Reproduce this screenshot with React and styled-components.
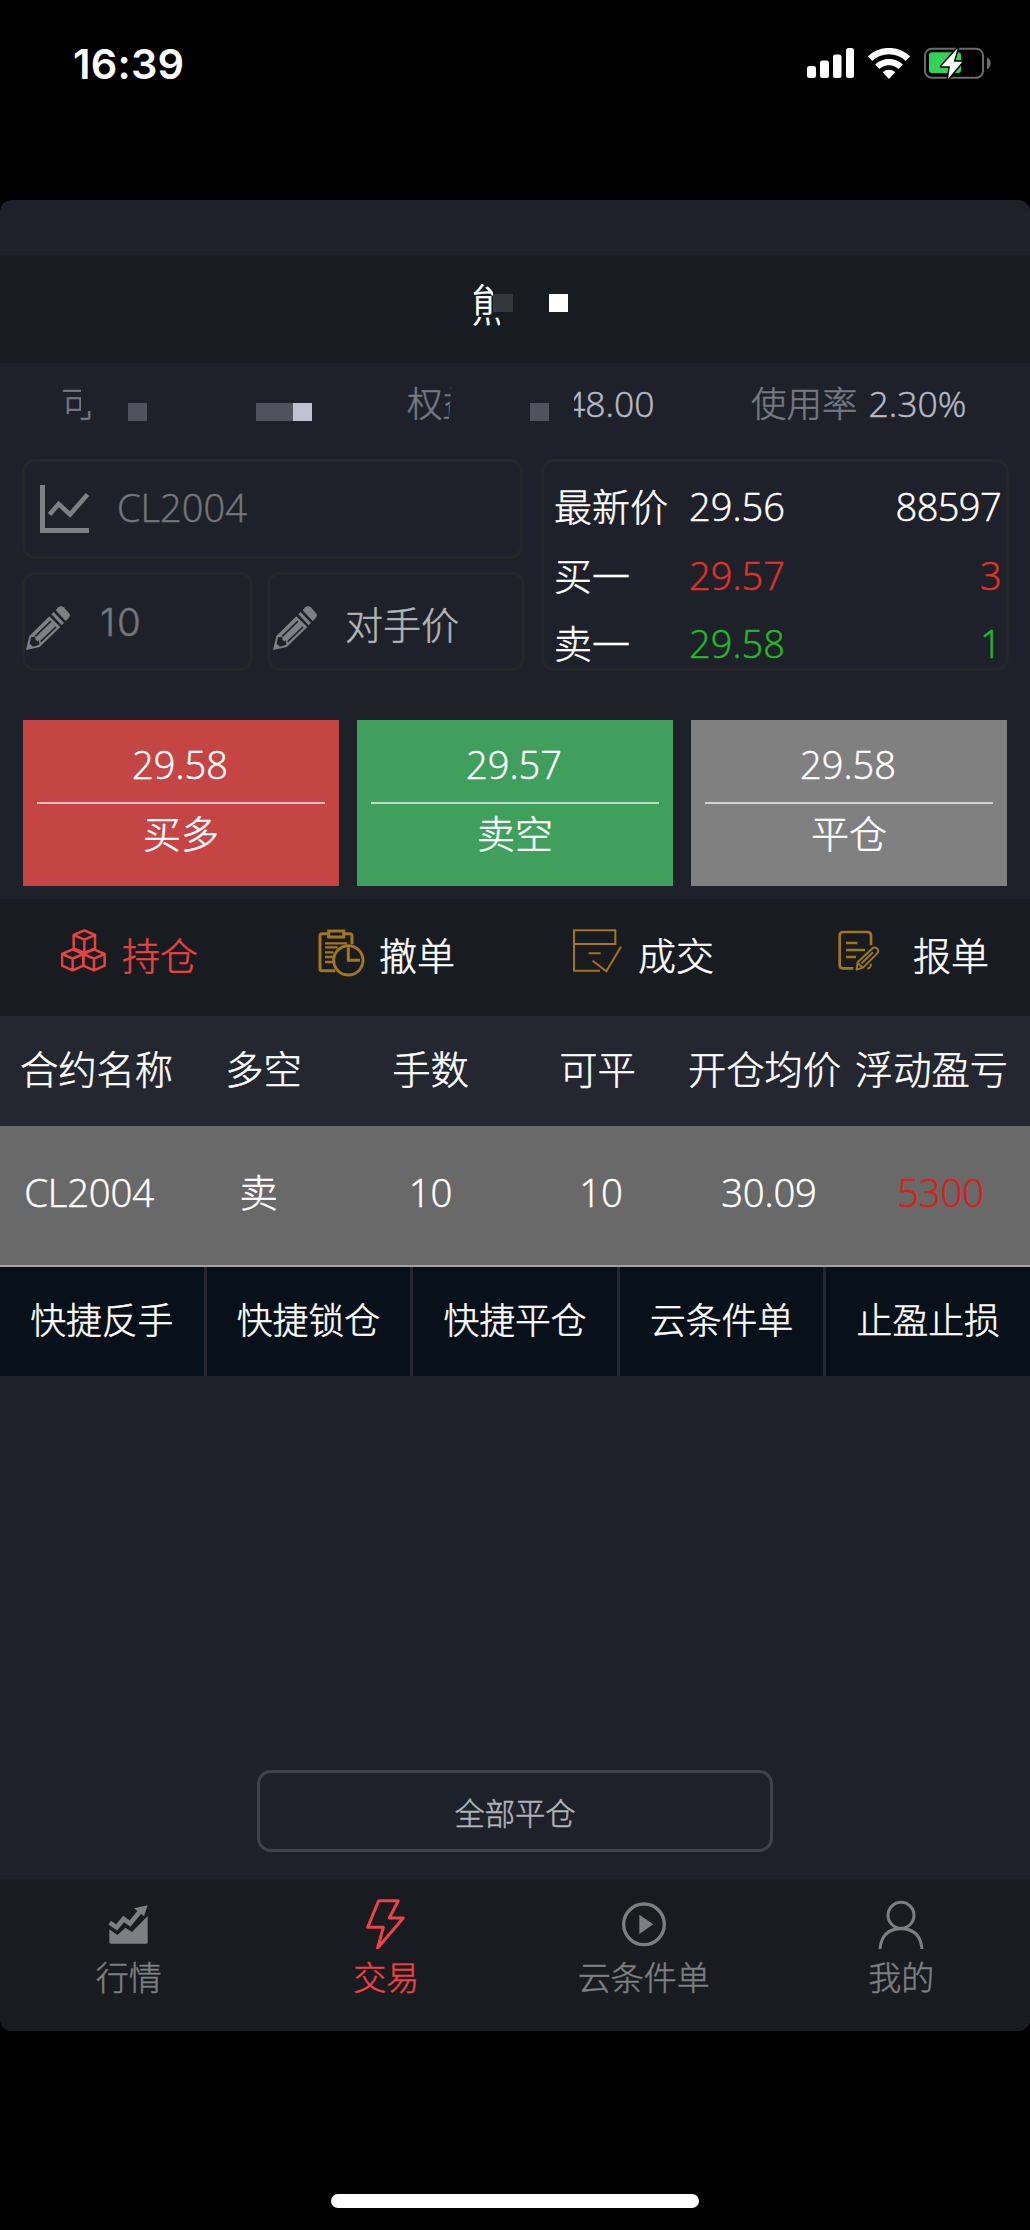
import React from 'react';
import styled, { createGlobalStyle } from 'styled-components';

const GlobalStyle = createGlobalStyle`
  * {
    box-sizing: border-box;
  }
  body {
    margin: 0;
    background: #000;
    color: #fff;
    font-family: 'Open Sans', 'Noto Sans CJK SC', sans-serif;
    font-weight: 300;
    -webkit-text-stroke: 0.5px currentColor;
  }
`;

const Phone = styled.div`
  width: 1030px;
  height: 2230px;
  background: #000;
  display: flex;
  flex-direction: column;
  overflow: hidden;
`;

const StatusBar = styled.header`
  height: 200px;
  padding: 38px 39px 0 73px;
  display: flex;
  justify-content: space-between;
  align-items: flex-start;
`;

const Clock = styled.time`
  font-family: Inter, sans-serif;
  font-weight: 600;
  font-size: 41.5px;
  letter-spacing: 0.2px;
  line-height: 52px;
  -webkit-text-stroke: 0;
`;

const StatusIcons = styled.div`
  display: flex;
  align-items: center;
  gap: 14px;
  height: 50px;
  svg {
    display: block;
  }
`;

const Screen = styled.main`
  height: 1831px;
  background: #1e2129;
  border-radius: 12px;
  overflow: hidden;
  display: flex;
  flex-direction: column;
`;

const TitleBar = styled.div`
  margin-top: 55px;
  height: 108px;
  padding: 0 0 13px 471px;
  background: #181b1f;
  display: flex;
  align-items: center;
  font-size: 44px;
  line-height: 48px;
`;

const Cut = styled.span`
  width: ${({ $width }) => $width}px;
  padding-top: ${({ $drop }) => $drop || 0}px;
  white-space: nowrap;
  clip-path: ${({ $clip }) => $clip};
`;

const Block = styled.i`
  width: ${({ $width }) => $width || 19}px;
  height: 18px;
  margin-left: ${({ $left }) => $left || 0}px;
  background: ${({ $color }) => $color || '#50525e'};
`;

const Account = styled.div`
  height: 96px;
  padding: 0 0 16px 61px;
  display: flex;
  align-items: center;
  font-size: 35.5px;
  line-height: 44px;
  color: #777981;
  white-space: nowrap;
  ${Block} {
    position: relative;
    top: 9px;
  }
`;

const Figure = styled.span`
  color: #b8bac6;
  margin-left: ${({ $left }) => $left || 0}px;
  width: ${({ $width }) => $width}px;
  clip-path: ${({ $clip }) => $clip || 'none'};
`;

const Label = styled.span`
  margin-left: ${({ $left }) => $left}px;
`;

const Order = styled.section`
  height: 212px;
  padding: 0 21px 0 22px;
  display: grid;
  grid-template-columns: 503px 468px;
  grid-template-rows: 212px;
  column-gap: 16px;
`;

const Inputs = styled.div`
  display: grid;
  grid-template-columns: 231px 258px;
  grid-template-rows: 100px 99px;
  gap: 13px 14px;
`;

const Field = styled.div`
  grid-column: ${({ $wide }) => ($wide ? '1 / 3' : 'auto')};
  width: ${({ $wide }) => ($wide ? '501px' : 'auto')};
  border: 3px solid #25262a;
  border-radius: 13px;
  display: flex;
  align-items: center;
  padding-left: ${({ $inset }) => $inset}px;
  padding-top: ${({ $wide }) => ($wide ? 0 : 12)}px;
  font-size: 38px;
  line-height: 46px;
  color: #74767b;
  svg {
    flex: none;
    color: #7f8084;
  }
`;

const FieldText = styled.span`
  margin-left: ${({ $left }) => $left}px;
  margin-top: ${({ $lift }) => -$lift}px;
  color: ${({ $bright }) => ($bright ? '#b4b5b8' : 'inherit')};
`;

const Quantity = styled(FieldText)`
  font-family: Inter, sans-serif;
  font-size: 38.5px;
  letter-spacing: 1.8px;
`;

const Quote = styled.div`
  border: 3px solid #25262a;
  border-radius: 13px;
  padding: 10px 5px 0 10px;
  font-size: 38px;
`;

const QuoteRow = styled.div`
  height: 68.5px;
  display: grid;
  grid-template-columns: 135px 1fr auto;
  align-items: center;
  line-height: 46px;
  color: ${({ $color }) => $color || '#fff'};
  letter-spacing: -0.6px;
  span:first-child {
    color: #fff;
    letter-spacing: 0;
  }
  span:nth-child(2) {
    letter-spacing: 0;
  }
`;

const TradeButtons = styled.div`
  height: 228px;
  padding: 49px 23px 13px;
  display: grid;
  grid-template-columns: repeat(3, 316px);
  gap: 18px;
`;

const TradeButton = styled.button`
  border: 0;
  padding: 7px 14px 0;
  background: ${({ $bg }) => $bg};
  color: #fff;
  font: inherit;
  font-size: 38px;
  line-height: 74px;
  text-align: center;
  display: flex;
  flex-direction: column;
`;

const Price = styled.span`
  border-bottom: 2px solid rgba(255, 255, 255, 0.65);
  height: 77px;
  width: 100%;
  padding-right: 2px;
`;

const Action = styled.span`
  width: 100%;
  line-height: 58px;
`;

const Tabs = styled.nav`
  height: 117px;
  background: #181b1f;
  display: flex;
  align-items: flex-start;
  padding-top: 30px;
  font-size: 38px;
  line-height: 52px;
`;

const Tab = styled.a`
  display: flex;
  margin-left: ${({ $left }) => $left}px;
  color: ${({ $active }) => ($active ? '#e84342' : '#fff')};
  svg {
    flex: none;
    margin-right: ${({ $gap }) => $gap}px;
    margin-top: ${({ $top }) => $top || 0}px;
    color: ${({ $active }) => ($active ? '#e84342' : '#a2751f')};
  }
`;

const TabText = styled.span`
  width: 76px;
`;

const HeadRow = styled.div`
  height: 110px;
  padding: 0 13px 4px;
  background: #24272f;
  display: grid;
  grid-template-columns: repeat(6, 167px);
  align-items: center;
  text-align: center;
  font-size: 38.3px;
  line-height: 50px;
  white-space: nowrap;
`;

const DataRow = styled(HeadRow)`
  height: 141px;
  padding-bottom: 7px;
  background: #696969;
  border-bottom: 2px solid #a4a4a4;
  letter-spacing: -0.2px;
`;

const Cell = styled.span`
  padding-left: ${({ $indent }) => $indent || 0}px;
  padding-right: ${({ $outdent }) => $outdent || 0}px;
  color: ${({ $loss }) => ($loss ? '#d91e1c' : '#fff')};
`;

const Shortcuts = styled.div`
  height: 109px;
  background: #08111a;
  display: grid;
  grid-template-columns: repeat(4, 206.6px) 1fr;
`;

const Shortcut = styled.a`
  border-right: 3px solid #24262b;
  text-align: center;
  font-size: 35.8px;
  line-height: 107px;
  &:last-child {
    border-right: 0;
  }
`;

const CloseAll = styled.button`
  width: 516px;
  height: 82px;
  margin: auto auto 27px;
  padding: 6px 0 0;
  border: 3px solid #41434b;
  border-radius: 14px;
  background: transparent;
  color: #b2b3b7;
  font: inherit;
  font-size: 30.3px;
  line-height: 40px;
`;

const BottomNav = styled.nav`
  height: 152px;
  background: #181b1f;
  display: grid;
  grid-template-columns: repeat(4, 1fr);
`;

const NavItem = styled.a`
  display: flex;
  flex-direction: column;
  align-items: center;
  padding-top: 20px;
  font-size: 33px;
  line-height: 40px;
  color: ${({ $active }) => ($active ? '#ee4248' : '#7e7f81')};
  svg {
    margin-bottom: 9px;
  }
`;

const HomeIndicator = styled.div`
  width: 368px;
  height: 14px;
  margin: 163px auto 0;
  border-radius: 7px;
  background: #fff;
`;

const SignalIcon = () => (
  <svg width="47" height="30" viewBox="0 0 47 30" fill="#fff">
    <rect x="0" y="18" width="9" height="12" rx="2.5" />
    <rect x="13" y="12.5" width="9" height="17.5" rx="2.5" />
    <rect x="26" y="6.5" width="8.5" height="23.5" rx="2.5" />
    <rect x="39" y="0" width="8" height="30" rx="2.5" />
  </svg>
);

const WifiIcon = () => (
  <svg width="42" height="31" viewBox="0 0 42 31" fill="none" stroke="#fff">
    <path d="M2 10.7a27.6 27.6 0 0 1 38 0" strokeWidth="6.4" />
    <path d="M9.3 18.8a17 17 0 0 1 23.4 0" strokeWidth="6.2" />
    <path d="M14.7 24.3a9.2 9.2 0 0 1 12.6 0L21 31z" fill="#fff" stroke="none" />
  </svg>
);

const BatteryIcon = () => (
  <svg width="67" height="34" viewBox="432 49 201 102">
    <rect x="435" y="57" width="174" height="87" rx="20" fill="none" stroke="#6b6b6d" strokeWidth="6" />
    <path d="M621 83q11 6 11 18t-11 18z" fill="#6b6b6d" />
    <rect x="447" y="68" width="96" height="62" rx="9" fill="#32d158" />
    <path
      d="M533 56L484 110h26l-6 38 43-52h-26z"
      fill="#fff"
      stroke="#000"
      strokeWidth="9"
      strokeLinejoin="round"
      paintOrder="stroke"
    />
  </svg>
);

const ChartIcon = () => (
  <svg width="49" height="49" viewBox="0 0 49 49" fill="none" stroke="currentColor">
    <path d="M2.5 0v45.5H49" strokeWidth="5" />
    <path d="M9.5 29.5L18.7 19 30 29.5 47.5 9.5" strokeWidth="4.6" />
  </svg>
);

const PencilIcon = () => (
  <svg width="44" height="44" viewBox="0 0 132 132" fill="currentColor">
    <path d="M89 13l8-9q8-7 16 0l15 16q7 8 0 16l-9 9z" />
    <path d="M76 25l7-7 31 33-7 7z" />
    <path d="M70 31l33 32-62 60L0 132l10-42z" />
    <path d="M28 91l47-46M44 107l46-44" stroke="#1e2129" strokeWidth="5" fill="none" />
    <path d="M15 94l11-2 4 9 9 3 1 12-19 6-10-9z" fill="#1e2129" />
    <path d="M32 97l4 4 0 6-8-6z" />
  </svg>
);

const CubesIcon = () => (
  <svg
    width="45"
    height="43"
    viewBox="183 90 135 129"
    fill="none"
    stroke="currentColor"
    strokeWidth="7.5"
    strokeLinejoin="round"
  >
    <path d="M253 94l32 14v40l-32 14-32-14v-40zM221 108l32 14 32-14M253 122v40" />
    <path d="M218 151l32 14v35l-32 14-32-14v-35zM186 165l32 14 32-14M218 179v35" />
    <path d="M282 151l32 14v35l-32 14-32-14v-35zM250 165l32 14 32-14M282 179v35" />
  </svg>
);

const ClipboardClockIcon = () => (
  <svg width="47" height="48" viewBox="956 87 141 144" fill="none" stroke="currentColor" strokeWidth="9">
    <path d="M985 101h-17q-6 0-6 6v99q0 6 6 6h40M1034 101h17q7 0 7 6v26" />
    <rect x="988" y="93" width="45" height="18" />
    <path d="M977 130h67M977 142h38M977 157h26M977 171h24M977 186h26" strokeWidth="7" />
    <circle cx="1047" cy="181" r="44" />
    <path d="M1047 142v39h35" />
  </svg>
);

const DealIcon = () => (
  <svg width="50" height="44" viewBox="187 87 150 132" fill="none" stroke="currentColor" strokeWidth="6">
    <path d="M193 132V91h124v41zV212h78M237 160h36M249 182l41 32 44-74" />
  </svg>
);

const ReportIcon = () => (
  <svg
    width="42"
    height="42"
    viewBox="984 94 126 126"
    fill="none"
    stroke="currentColor"
    strokeWidth="8"
    strokeLinejoin="round"
  >
    <path d="M1083 140v-29q0-11-11-11h-72q-11 0-11 11v87q0 11 11 11h30" />
    <path d="M1008 133h34M1008 154h57M1008 175h30" />
    <path d="M1040 213l3-22 43-41q8-7 16 0 6 8-1 15l-42 42z" strokeWidth="6" />
    <path d="M1055 194l34-33M1043 193l15 14M1072 210q11-3 11-15" strokeWidth="6" />
  </svg>
);

const MarketIcon = () => (
  <svg width="48" height="50" viewBox="314 449 144 150">
    <path d="M327 540l24 17 24-22 20 13 47-48v79q0 4-4 4H331q-4 0-4-4z" fill="currentColor" />
    <path d="M328 520l21 14 21-25 19 14 33-40" fill="none" stroke="currentColor" strokeWidth="14" />
    <path d="M442 468l-41 9 30 24z" fill="currentColor" />
  </svg>
);

const BoltIcon = () => (
  <svg width="48" height="50" viewBox="1087 449 144 150">
    <path
      d="M1137 454h59l-27 52h42l-77 90 17-62h-47z"
      fill="none"
      stroke="currentColor"
      strokeWidth="9"
      strokeLinejoin="round"
    />
  </svg>
);

const PlayIcon = () => (
  <svg width="48" height="50" viewBox="329 448 144 150">
    <circle cx="401" cy="524" r="61" fill="none" stroke="currentColor" strokeWidth="10" />
    <path d="M387 495l42 29-42 29z" fill="currentColor" />
  </svg>
);

const UserIcon = () => (
  <svg width="48" height="50" viewBox="1102 449 144 150" fill="none" stroke="currentColor" strokeWidth="9">
    <circle cx="1174" cy="498" r="39" />
    <path d="M1111 600q5-62 63-62t63 62" />
  </svg>
);

const quotes = [
  { name: '最新价', price: '29.56', volume: '88597' },
  { name: '买一', price: '29.57', volume: '3', color: '#e0322a' },
  { name: '卖一', price: '29.58', volume: '1', color: '#22b82a' },
];

const trades = [
  { price: '29.58', label: '买多', bg: '#c54545' },
  { price: '29.57', label: '卖空', bg: '#419f5e' },
  { price: '29.58', label: '平仓', bg: '#808080' },
];

const columns = ['合约名称', '多空', '手数', '可平', '开仓均价', '浮动盈亏'];

const position = [
  { value: 'CL2004', outdent: 15 },
  { value: '卖', outdent: 10 },
  { value: '10' },
  { value: '10', indent: 7 },
  { value: '30.09', indent: 9 },
  { value: '5300', indent: 18, loss: true },
];

const shortcuts = ['快捷反手', '快捷锁仓', '快捷平仓', '云条件单', '止盈止损'];

const navItems = [
  { label: '行情', Icon: MarketIcon },
  { label: '交易', Icon: BoltIcon, active: true },
  { label: '云条件单', Icon: PlayIcon },
  { label: '我的', Icon: UserIcon },
];

export default function App() {
  return (
    <>
      <GlobalStyle />
      <Phone>
        <StatusBar>
          <Clock>16:39</Clock>
          <StatusIcons>
            <SignalIcon />
            <WifiIcon />
            <BatteryIcon />
          </StatusIcons>
        </StatusBar>

        <Screen>
          <TitleBar>
            <Cut
              $width={22}
              $drop={4}
              $clip="polygon(0 0, 22px 0, 22px 41px, 29px 41px, 29px 110%, 0 110%)"
            >
              熊
            </Cut>
            <Block $width={20} $color="#34373b" />
            <Block $left={36} $color="#fff" />
          </TitleBar>

          <Account>
            <Cut $width={36} $clip="polygon(0 0, 20px 0, 20px 30px, 31px 30px, 31px 100%, 0 100%)">
              可
            </Cut>
            <Block $left={31} />
            <Block $left={109} $width={37} />
            <Block $color="#c0c2d1" />
            <Label $left={95}>权</Label>
            <Cut $width={35.5} $clip="polygon(0 0, 9px 0, 6px 100%, 0 100%)">
              益
            </Cut>
            <Block $left={52} />
            <Figure $left={16} $width={94} $clip="inset(0 0 0 9px)">
              48.00
            </Figure>
            <Label $left={92}>使用率</Label>
            <Figure $left={11}>2.30%</Figure>
          </Account>

          <Order>
            <Inputs>
              <Field $wide $inset={15}>
                <ChartIcon />
                <FieldText $left={28} $lift={5}>
                  CL2004
                </FieldText>
              </Field>
              <Field $inset={1}>
                <PencilIcon />
                <Quantity $left={30} $lift={12}>
                  10
                </Quantity>
              </Field>
              <Field $inset={3}>
                <PencilIcon />
                <FieldText $left={28} $lift={8} $bright>
                  对手价
                </FieldText>
              </Field>
            </Inputs>
            <Quote>
              {quotes.map((quote) => (
                <QuoteRow key={quote.name} $color={quote.color}>
                  <span>{quote.name}</span>
                  <span>{quote.price}</span>
                  <span>{quote.volume}</span>
                </QuoteRow>
              ))}
            </Quote>
          </Order>

          <TradeButtons>
            {trades.map((trade) => (
              <TradeButton key={trade.label} $bg={trade.bg}>
                <Price>{trade.price}</Price>
                <Action>{trade.label}</Action>
              </TradeButton>
            ))}
          </TradeButtons>

          <Tabs>
            <Tab $active $left={61} $gap={16}>
              <CubesIcon />
              <TabText>持仓</TabText>
            </Tab>
            <Tab $left={120} $gap={14}>
              <ClipboardClockIcon />
              <TabText>撤单</TabText>
            </Tab>
            <Tab $left={117} $gap={16}>
              <DealIcon />
              <TabText>成交</TabText>
            </Tab>
            <Tab $left={124} $gap={33} $top={1}>
              <ReportIcon />
              <TabText>报单</TabText>
            </Tab>
          </Tabs>

          <HeadRow>
            {columns.map((name) => (
              <Cell key={name}>{name}</Cell>
            ))}
          </HeadRow>
          <DataRow>
            {position.map((cell, index) => (
              <Cell
                key={`cell-${index}`}
                $indent={cell.indent}
                $outdent={cell.outdent}
                $loss={cell.loss}
              >
                {cell.value}
              </Cell>
            ))}
          </DataRow>

          <Shortcuts>
            {shortcuts.map((name) => (
              <Shortcut key={name}>{name}</Shortcut>
            ))}
          </Shortcuts>

          <CloseAll>全部平仓</CloseAll>

          <BottomNav>
            {navItems.map(({ label, Icon, active }) => (
              <NavItem key={label} $active={active}>
                <Icon />
                <span>{label}</span>
              </NavItem>
            ))}
          </BottomNav>
        </Screen>

        <HomeIndicator />
      </Phone>
    </>
  );
}
